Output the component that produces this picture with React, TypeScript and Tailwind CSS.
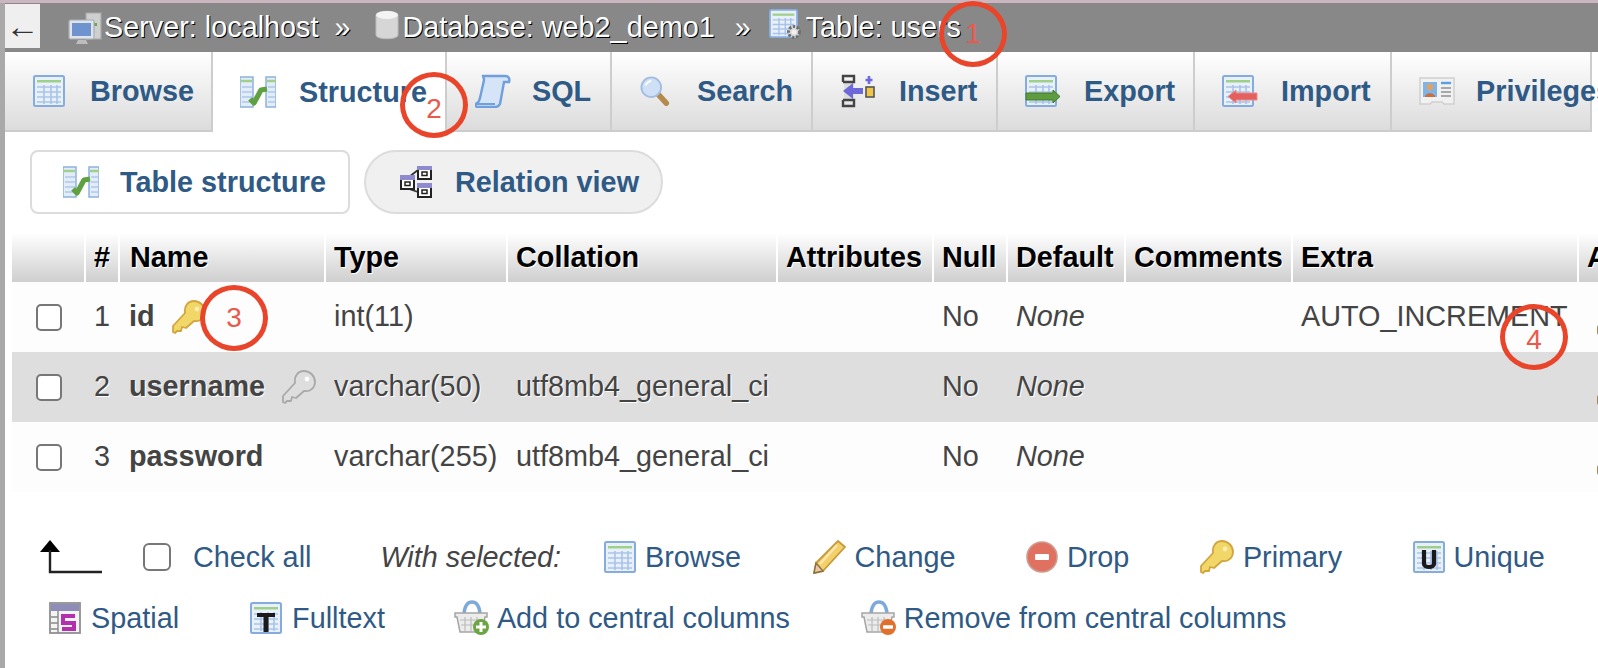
import React from "react";

type P = { className?: string };
const box = "shrink-0 blur-[0.5px]";

function Sheet({ children, className = "w-[32px] h-[32px]", vb = "0 0 32 32" }: P & { children?: React.ReactNode; vb?: string }) {
  return (
    <svg viewBox={vb} className={`${box} ${className}`}>
      <rect x="1" y="1" width="30" height="30" rx="1.5" fill="#e8f0fb" stroke="#86abdd" strokeWidth="2" />
      <rect x="4" y="5" width="24" height="2.5" fill="#9fd08a" />
      <path d="M4 12H28M4 17H28M4 22H28M4 27H28M11 10V29M18 10V29M24 10V29" fill="none" stroke="#a9c3e8" strokeWidth="1.6" />
      {children}
    </svg>
  );
}

const TableIcon = (p: P) => <Sheet {...p} />;

function StructureIcon({ className = "w-[36px] h-[32px]" }: P) {
  return (
    <svg viewBox="0 0 36 32" className={`${box} ${className}`}>
      <path d="M0 1H13V31H0Z" fill="#e3edfa" stroke="#8fb1de" strokeWidth="1.5" />
      <path d="M26 1H36V31H26Z" fill="#e3edfa" stroke="#8fb1de" strokeWidth="1.5" />
      <path d="M1 5H12M27 5H36" stroke="#9fd08a" strokeWidth="2.5" />
      <path d="M2 11H12M2 16H12M2 21H12M2 26H12M28 11H35M28 16H35M28 21H35M28 26H35" stroke="#afc7ea" strokeWidth="1.5" />
      <path d="M10 23L14 27L21 14L27 13" fill="none" stroke="#5fa040" strokeWidth="5.2" strokeLinejoin="round" />
    </svg>
  );
}

function SqlIcon() {
  return (
    <svg viewBox="0 0 36 34" className={`${box} w-[36px] h-[34px]`}>
      <path d="M8 2H30C34 2 35 5 34 8H29L25 30C24 32 22 33 20 33H3C0 33 0 30 2 29C4 28 4 27 5 24L9 6C9 4 8 3 8 2Z" fill="#d6e4f7" stroke="#6f9fdc" strokeWidth="2.4" />
      <path d="M2 30H20" stroke="#6f9fdc" strokeWidth="2" />
    </svg>
  );
}

function SearchIcon() {
  return (
    <svg viewBox="0 0 32 32" className={`${box} w-[30px] h-[30px]`}>
      <path d="M19 19L28 29" stroke="#b58a4f" strokeWidth="6" strokeLinecap="round" />
      <circle cx="12" cy="12" r="10.5" fill="#cfe0f6" stroke="#a3bde0" strokeWidth="2" />
      <path d="M6 10C7 7 9 6 12 5" stroke="#fff" strokeWidth="2" fill="none" />
    </svg>
  );
}

function InsertIcon() {
  return (
    <svg viewBox="0 0 34 34" className={`${box} w-[34px] h-[34px]`}>
      <rect x="3" y="7" width="10" height="20" fill="#ddd" />
      <g fill="none" stroke="#444" strokeWidth="2.4">
        <path d="M2 8V2H13V8H2" />
        <path d="M2 26V32H13V26H2" />
      </g>
      <path d="M2 17L12 9V14H22V20H12V25Z" fill="#6d69d8" />
      <rect x="25" y="13" width="8" height="10" fill="#f0c64a" stroke="#555" strokeWidth="1.6" />
      <path d="M28 2V10M24.5 6H31.5" stroke="#6d69d8" strokeWidth="2.6" />
    </svg>
  );
}

function ExportIcon() {
  return (
    <Sheet className="w-[36px] h-[32px]" vb="0 0 36 32">
      <path d="M1 18H28V15L35 21.5L28 28V25H1Z" fill="#5f9b3f" stroke="#3f7a2a" strokeWidth="1" />
    </Sheet>
  );
}

function ImportIcon() {
  return (
    <Sheet className="w-[36px] h-[32px]" vb="0 0 36 32">
      <path d="M35 18H14V15L6 21.5L14 28V25H35Z" fill="#e4605f" stroke="#e88a8a" strokeWidth="1" />
    </Sheet>
  );
}

function PrivIcon() {
  return (
    <svg viewBox="0 0 36 28" className={`${box} w-[36px] h-[28px]`}>
      <path d="M1 1H35V27H25L23 25H13L11 27H1Z" fill="#f1f1f1" stroke="#d0d0d0" strokeWidth="1.5" />
      <rect x="4" y="5" width="14" height="15" fill="#7fb4e8" />
      <circle cx="11" cy="10" r="3.5" fill="#d9a36f" />
      <path d="M6 20C6 15 16 15 16 20Z" fill="#c8703f" />
      <path d="M22 6H32" stroke="#5aa0e0" strokeWidth="2.4" />
      <path d="M22 11H32M22 15H32M22 19H32" stroke="#a8a8a8" strokeWidth="1.8" />
    </svg>
  );
}

function RelationIcon() {
  return (
    <svg viewBox="0 0 34 32" className={`${box} w-[34px] h-[32px]`}>
      <path d="M10 11L19 4M10 23L19 26" stroke="#333" strokeWidth="1.8" />
      {[[2, 10], [19, 0], [19, 18]].map(([x, y], i) => (
        <g key={i}>
          <rect x={x} y={y} width="13" height="13" fill="#fff" stroke="#222" strokeWidth="2" />
          <rect x={x - 1} y={y - 1} width="15" height="5" fill="#8d8ad0" />
          <rect x={x + 4} y={y + 6} width="5" height="3.5" fill="#fff" stroke="#222" strokeWidth="1.5" />
        </g>
      ))}
    </svg>
  );
}

function KeyIcon({ gray = false, className = "w-[34px] h-[34px]" }: P & { gray?: boolean }) {
  const f = gray ? "#dedede" : "#f1d668";
  const s = gray ? "#a9a9a9" : "#d2a53f";
  return (
    <svg viewBox="0 0 34 34" className={`${box} ${className}`}>
      <path d="M22 1C28 1 33 6 33 12C33 18 28 22 22 21L14 28L10 27L9 31L5 31L3 33L1 32L1 26L13 13C12 6 16 1 22 1Z" fill={f} stroke={s} strokeWidth="1.8" strokeLinejoin="round" />
      <circle cx="25" cy="9" r="2.4" fill={gray ? "#fff" : "#fbeeb0"} />
    </svg>
  );
}

function PencilIcon() {
  return (
    <svg viewBox="0 0 34 34" className={`${box} w-[34px] h-[34px]`}>
      <path d="M26 1L33 7L11 31L2 33L4 23Z" fill="#f3d06a" stroke="#c99a3c" strokeWidth="1.8" strokeLinejoin="round" />
      <path d="M4 23L11 31L2 33Z" fill="#e9c9a0" stroke="#8d6f44" strokeWidth="1.4" />
      <path d="M25 5L8 24" stroke="#fbeaad" strokeWidth="2.4" />
    </svg>
  );
}

function DropIcon() {
  return (
    <svg viewBox="0 0 32 32" className={`${box} w-[32px] h-[32px]`}>
      <circle cx="16" cy="16" r="15" fill="#e0705f" stroke="#cf9a90" strokeWidth="1.6" />
      <rect x="9" y="13" width="14" height="6" rx="1" fill="#fff" />
    </svg>
  );
}

function UniqueIcon() {
  return (
    <Sheet>
      <path d="M11 9V23C11 27 21 27 21 23V9" fill="none" stroke="#1a1a1a" strokeWidth="4.2" />
    </Sheet>
  );
}

function FulltextIcon() {
  return (
    <Sheet>
      <path d="M7 11H25V15H18.5V30H13.5V15H7Z" fill="#1a1a1a" />
    </Sheet>
  );
}

function SpatialIcon() {
  return (
    <svg viewBox="0 0 32 32" className={`${box} w-[32px] h-[32px]`}>
      <rect x="1" y="1" width="30" height="30" fill="#f4f4f4" stroke="#8f8f8f" strokeWidth="1.8" />
      <rect x="2" y="2" width="28" height="7" fill="#8d8db8" />
      <path d="M9 9V31M2 15H9M2 21H9M2 27H9" stroke="#888" strokeWidth="1.4" />
      <path d="M26 14H14V21H25V27H13" fill="none" stroke="#b32fb0" strokeWidth="4" />
    </svg>
  );
}

function BasketIcon({ add }: { add: boolean }) {
  return (
    <svg viewBox="0 0 36 36" className={`${box} w-[36px] h-[36px]`}>
      <path d="M10 13C11 5 14 2 18 2C22 2 25 5 26 13" fill="none" stroke="#7ea9d9" strokeWidth="3.5" />
      <path d="M1 13H33V17H31L28 32H6L3 17H1Z" fill="#ececec" stroke="#a5a5a5" strokeWidth="1.5" />
      <path d="M6 20H29M7 25H28M11 17V31M17 17V31M23 17V31" stroke="#bcbcbc" strokeWidth="1.2" />
      <circle cx="27" cy="27" r="8" fill={add ? "#6da544" : "#e2702d"} />
      {add ? <path d="M27 22V32M22 27H32" stroke="#fff" strokeWidth="3" /> : <path d="M22 27H32" stroke="#fff" strokeWidth="3.5" />}
    </svg>
  );
}

function ServerIcon() {
  return (
    <svg viewBox="0 0 34 34" className={`${box} w-[34px] h-[34px]`}>
      <path d="M18 2H33V28H18Z" fill="#cfcfcf" stroke="#a9a9a9" strokeWidth="1.2" />
      <rect x="26" y="12" width="3" height="3" fill="#5fae4a" />
      <rect x="1" y="9" width="25" height="19" rx="1.5" fill="#dfe3ea" stroke="#a8adb5" strokeWidth="1.2" />
      <rect x="4" y="12" width="19" height="13" fill="#6f93cf" />
      <path d="M10 29H18L20 33H8Z" fill="#bdbdbd" />
    </svg>
  );
}

function DbIcon() {
  return (
    <svg viewBox="0 0 24 30" className={`${box} w-[24px] h-[30px]`}>
      <path d="M1 5C1 0 23 0 23 5V25C23 30 1 30 1 25Z" fill="#d6d6d6" stroke="#bcbcbc" strokeWidth="1" />
      <ellipse cx="12" cy="5" rx="11" ry="4" fill="#f3f3f3" />
    </svg>
  );
}

function TableOpsIcon() {
  return (
    <div className="relative w-[34px] h-[32px] shrink-0">
      <Sheet className="w-[29px] h-[29px]" />
      <svg viewBox="0 0 18 18" className="absolute right-0 bottom-0 w-[18px] h-[18px] blur-[0.5px]">
        <circle cx="9" cy="9" r="5.5" fill="#d8d8d8" stroke="#6f6f6f" strokeWidth="3" strokeDasharray="2.5 1.5" />
        <circle cx="9" cy="9" r="2.5" fill="#f0f0f0" />
      </svg>
    </div>
  );
}

function Tab({ w, pad, slot, icon, label, active = false }: { w: string; pad: string; slot: string; icon: React.ReactNode; label: string; active?: boolean }) {
  return (
    <div
      className={`${w} ${pad} ${active ? "bg-white" : "bg-gradient-to-b from-white to-[#dcdcdc] border-b-[2px] border-[#ccc]"} shrink-0 h-full flex items-center border-r-[2px] border-r-[#cdcdcd] font-bold text-[#2f5a85]`}
    >
      <div className={`${slot} shrink-0 flex items-center`}>{icon}</div>
      <span className="whitespace-nowrap">{label}</span>
    </div>
  );
}

const colClasses = [
  "w-[74px]",
  "w-[34px]",
  "w-[206px]",
  "w-[182px]",
  "w-[270px]",
  "w-[156px]",
  "w-[74px]",
  "w-[118px]",
  "w-[167px]",
  "w-[286px]",
  "w-[40px]",
];

const headers = ["", "#", "Name", "Type", "Collation", "Attributes", "Null", "Default", "Comments", "Extra", "Action"];

const rows = [
  { n: 1, name: "id", key: "gold", type: "int(11)", coll: "", extra: "AUTO_INCREMENT", bg: "bg-[#fdfdfd]" },
  { n: 2, name: "username", key: "gray", type: "varchar(50)", coll: "utf8mb4_general_ci", extra: "", bg: "bg-[#dedede]" },
  { n: 3, name: "password", key: "", type: "varchar(255)", coll: "utf8mb4_general_ci", extra: "", bg: "bg-[#fdfdfd]" },
];

function Cell({ i, children, className = "pl-[8px]" }: { i: number; children?: React.ReactNode; className?: string }) {
  return <div className={`${colClasses[i]} shrink-0 flex items-center whitespace-nowrap ${className}`}>{children}</div>;
}

function Check({ className = "w-[26px] h-[27px]" }: P) {
  return <div className={`${className} shrink-0 rounded-[5px] border-2 border-[#777] bg-white`} />;
}

function Action({ icon, label, className = "gap-[9px]" }: { icon: React.ReactNode; label: string; className?: string }) {
  return (
    <div className={`flex items-center text-[#2f5a85] whitespace-nowrap ${className}`}>
      {icon}
      <span>{label}</span>
    </div>
  );
}

function Mark({ n, className }: { n: string; className: string }) {
  return (
    <div className={`absolute w-[68px] h-[66px] rounded-[50%] border-[5px] border-[#e8452a] flex items-center justify-center text-[28px] leading-none text-[#ea5a4c] font-light ${className}`}>
      {n}
    </div>
  );
}

const cellText = "pl-[8px] pb-[1px]";

export default function App() {
  return (
    <div className="relative w-[1598px] h-[668px] overflow-hidden bg-white text-[28.8px] leading-none text-[#444] font-['Liberation_Sans',Arial,sans-serif]">
      <div className="h-[3px] bg-[#cbb5bf]" />
      <div className="flex h-[665px]">
        <div className="w-[5px] shrink-0 bg-[#a9a9a9]" />
        <div className="flex-1 min-w-0 flex flex-col">
          <div className="h-[49px] shrink-0 bg-[#888] flex items-center text-white [text-shadow:1px_1px_0_#000] whitespace-nowrap">
            <div className="w-[35px] h-[44px] mt-[-3px] bg-[#efefef] flex items-center justify-center text-[#333] text-[34px] [text-shadow:none]">←</div>
            <div className="ml-[28px]"><ServerIcon /></div>
            <span className="ml-[2px]">Server: localhost</span>
            <span className="ml-[16px]">»</span>
            <div className="ml-[24px] mt-[-6px]"><DbIcon /></div>
            <span className="ml-[4px]">Database: web2_demo1</span>
            <span className="ml-[20px]">»</span>
            <div className="ml-[18px] mt-[-6px]"><TableOpsIcon /></div>
            <span className="ml-[3px]">Table: users</span>
          </div>

          <div className="h-[80px] flex shrink-0">
            <Tab w="w-[208px]" pad="pl-[28px]" slot="w-[57px]" icon={<TableIcon />} label="Browse" />
            <Tab w="w-[234px]" pad="pl-[27px]" slot="w-[59px]" icon={<StructureIcon />} label="Structure" active />
            <Tab w="w-[165px]" pad="pl-[28px]" slot="w-[57px]" icon={<SqlIcon />} label="SQL" />
            <Tab w="w-[201px]" pad="pl-[28px]" slot="w-[57px]" icon={<SearchIcon />} label="Search" />
            <Tab w="w-[185px]" pad="pl-[28px]" slot="w-[58px]" icon={<InsertIcon />} label="Insert" />
            <Tab w="w-[197px]" pad="pl-[27px]" slot="w-[59px]" icon={<ExportIcon />} label="Export" />
            <Tab w="w-[197px]" pad="pl-[27px]" slot="w-[59px]" icon={<ImportIcon />} label="Import" />
            <Tab w="w-[200px]" pad="pl-[27px]" slot="w-[57px]" icon={<PrivIcon />} label="Privileges" />
          </div>

          <div className="flex items-center gap-[14px] pl-[25px] pt-[18px] font-bold text-[#2f5a85]">
            <div className="w-[320px] h-[64px] flex items-center pl-[31px] rounded-[8px] border-2 border-[#dcdcdc] bg-white">
              <StructureIcon />
              <span className="ml-[21px]">Table structure</span>
            </div>
            <div className="w-[299px] h-[64px] flex items-center pl-[33px] rounded-full border-2 border-[#dcdcdc] bg-[#f0f0f0]">
              <RelationIcon />
              <span className="ml-[22px]">Relation view</span>
            </div>
          </div>

          <div className="ml-[7px] mt-[19px] w-[1610px]">
            <div className="h-[49px] flex font-bold text-black [text-shadow:1px_1px_0_#fff]">
              {headers.map((h, i) => (
                <Cell key={i} i={i} className={`border-r-[2px] border-white bg-gradient-to-b from-white to-[#cfcfcf] ${i === 2 ? "pl-[10px]" : "pl-[8px]"}`}>{h}</Cell>
              ))}
            </div>
            {rows.map((r) => (
              <div key={r.n} className={`h-[70px] flex ${r.bg} ${r.n === 2 ? "[text-shadow:1px_1px_0_#fff]" : ""}`}>
                <Cell i={0} className="pl-[24px]"><Check /></Cell>
                <Cell i={1} className={cellText}>{r.n}</Cell>
                <Cell i={2} className="pl-[9px] pb-[1px]">
                  <b className="font-bold">{r.name}</b>
                  {r.key === "gold" && <KeyIcon className="ml-[17px] w-[34px] h-[34px]" />}
                  {r.key === "gray" && <KeyIcon gray className="ml-[17px] w-[34px] h-[34px]" />}
                </Cell>
                <Cell i={3} className={cellText}>{r.type}</Cell>
                <Cell i={4} className={cellText}>{r.coll}</Cell>
                <Cell i={5} />
                <Cell i={6} className={cellText}>{"No"}</Cell>
                <Cell i={7} className={`${cellText} italic`}>None</Cell>
                <Cell i={8} />
                <Cell i={9} className={cellText}>{r.extra}</Cell>
                <Cell i={10}>
                  <div className="w-[20px] h-[12px] rounded-sm bg-[#a5874f] mt-[26px] ml-[10px]" />
                </Cell>
              </div>
            ))}
          </div>

          <div className="mt-[45px] flex items-center pl-[35px] h-[40px]">
            <svg viewBox="0 0 62 34" className="w-[62px] h-[34px] shrink-0">
              <path d="M10 0L20 12H0Z" fill="#000" />
              <path d="M10 10V32H62" fill="none" stroke="#222" strokeWidth="2.4" />
            </svg>
            <Check className="w-[28px] h-[28px] ml-[41px] rounded-[6px]" />
            <span className="ml-[22px] text-[#2f5a85]">Check all</span>
            <i className="ml-[69px] whitespace-nowrap">With selected:</i>
            <div className="ml-[43px] flex items-center gap-[70.5px]">
              <Action icon={<TableIcon />} label="Browse" />
              <Action icon={<PencilIcon />} label="Change" />
              <Action icon={<DropIcon />} label="Drop" />
              <Action icon={<KeyIcon />} label="Primary" />
              <Action icon={<UniqueIcon />} label="Unique" />
            </div>
          </div>

          <div className="mt-[21px] flex items-center pl-[44px] h-[40px]">
            <Action className="gap-[10px]" icon={<SpatialIcon />} label="Spatial" />
            <Action className="gap-[10px] ml-[71px]" icon={<FulltextIcon />} label="Fulltext" />
            <Action className="gap-[7px] ml-[69px]" icon={<BasketIcon add />} label="Add to central columns" />
            <Action className="gap-[7px] ml-[71px]" icon={<BasketIcon add={false} />} label="Remove from central columns" />
          </div>
        </div>
      </div>

      <Mark n="1" className="left-[939px] top-[1px]" />
      <Mark n="2" className="left-[400px] top-[72px] pt-[8px]" />
      <Mark n="3" className="left-[200px] top-[285px]" />
      <Mark n="4" className="left-[1500px] top-[304px] pt-[6px]" />
    </div>
  );
}
